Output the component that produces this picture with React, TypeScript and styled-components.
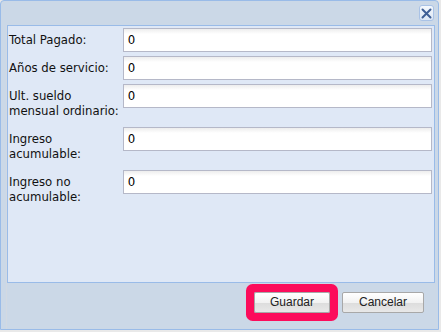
import React from "react";
import styled, { createGlobalStyle } from "styled-components";

const Global = createGlobalStyle`
  html, body { margin: 0; padding: 0; background: #e9e9e9; }
  body { width: 441px; height: 332px; overflow: hidden; }
`;

const Win = styled.div`
  box-sizing: border-box;
  width: 439px;
  height: 330px;
  border: 1px solid #99bbe8;
  border-radius: 4px 4px 0 0;
  background: #cbd8e7;
  display: flex;
  flex-direction: column;
  font-family: "DejaVu Sans Condensed", "DejaVu Sans", sans-serif;
  font-stretch: condensed;
`;

const Header = styled.div`
  height: 24px;
  display: flex;
  align-items: flex-start;
  justify-content: flex-end;
  padding: 4px 4px 0 0;
  box-sizing: border-box;
`;

const CloseBtn = styled.div`
  width: 15px;
  height: 16px;
  box-sizing: border-box;
  border: 1px solid #a9c2e6;
  border-radius: 3px;
  background: linear-gradient(#f4f8fd, #dce7f6);
  display: flex;
  align-items: center;
  justify-content: center;
`;

const Frame = styled.div`
  flex: 1;
  display: flex;
  flex-direction: column;
  margin-left: 5px;
  border-left: 1px solid #d2d9e2;
  padding-right: 3px;
`;

const Body = styled.div`
  height: 258px;
  box-sizing: border-box;
  border: 1px solid #99bbe8;
  background: #dfe8f6;
  padding: 2px 2px 0 1px;
  display: flex;
  flex-direction: column;
`;

const Row = styled.div`
  display: flex;
  align-items: flex-start;
  margin-bottom: 4px;
`;

const Label = styled.div<{ $tall?: boolean }>`
  width: 114px;
  font-size: 13px;
  line-height: 15px;
  color: #111;
  padding-top: 4px;
  min-height: ${(p) => (p.$tall ? "35px" : "20px")};
`;

const Input = styled.div`
  width: 310px;
  height: 24px;
  box-sizing: border-box;
  border: 1px solid #b5b8c8;
  background: linear-gradient(#ededed 0px, #fff 5px, #fff 100%);
  font-size: 13px;
  line-height: 22px;
  padding-left: 4px;
  color: #000;
`;

const Footer = styled.div`
  flex: 1;
  display: flex;
  justify-content: flex-end;
  align-items: flex-start;
  padding: 9px 11px 0 0;
  gap: 12px;
`;

const Button = styled.div<{ $w: number; $hl?: boolean }>`
  width: ${(p) => p.$w}px;
  height: 21px;
  box-sizing: border-box;
  border: 1px solid #a8a8a8;
  border-radius: 2px;
  background: linear-gradient(#ffffff 0%, #f2f2f2 50%, #dcdcdc 51%, #e8e8e8 100%);
  font-family: "Liberation Sans", Arial, sans-serif;
  font-size: 12px;
  line-height: 19px;
  text-align: center;
  color: #222;
  box-shadow: ${(p) => (p.$hl ? "0 0 0 8px #fc0c5b" : "none")};
`;

const fields: { label: string; tall?: boolean }[] = [
  { label: "Total Pagado:" },
  { label: "Años de servicio:" },
  { label: "Ult. sueldo mensual ordinario:", tall: true },
  { label: "Ingreso acumulable:", tall: true },
  { label: "Ingreso no acumulable:", tall: true },
];

export default function App() {
  return (
    <>
      <Global />
      <Win>
        <Header>
          <CloseBtn>
            <svg width="11" height="11" viewBox="0 0 11 11">
              <path d="M1.5 1.5 L9.5 9.5 M9.5 1.5 L1.5 9.5" stroke="#3f5f95" strokeWidth="2" strokeLinecap="round" />
            </svg>
          </CloseBtn>
        </Header>
        <Frame>
          <Body>
            {fields.map((f) => (
              <Row key={f.label}>
                <Label $tall={f.tall}>{f.label}</Label>
                <Input>0</Input>
              </Row>
            ))}
          </Body>
          <Footer>
            <Button $w={76} $hl>Guardar</Button>
            <Button $w={82}>Cancelar</Button>
          </Footer>
        </Frame>
      </Win>
    </>
  );
}
